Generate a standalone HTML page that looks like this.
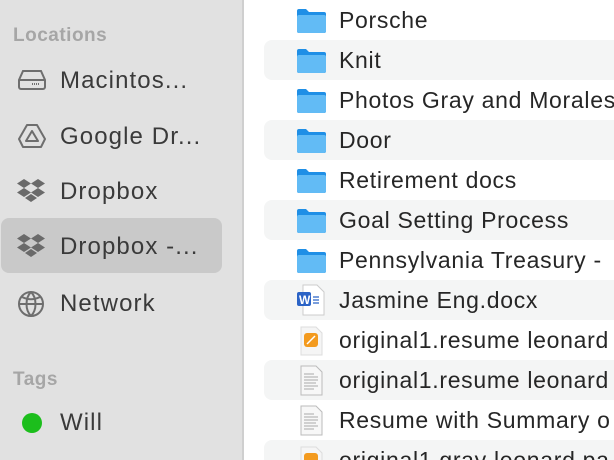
<!DOCTYPE html><html><head><style>
html,body{margin:0;width:614px;height:460px;overflow:hidden}
body{background:#fff;font-family:"Liberation Sans",sans-serif;position:relative}
#sb{position:absolute;left:0;top:0;width:242px;height:460px;background:#e1e1e1;border-right:2px solid #cfcfcf}
.h{position:absolute;left:13px;font-size:19px;font-weight:bold;color:#a6a6a6;letter-spacing:0.5px}
.it{position:absolute;left:60px;font-size:24px;color:#3a3a3a;line-height:30px;letter-spacing:1.1px}
.ic{position:absolute;left:17px}
.sel{position:absolute;left:1px;top:218px;width:221px;height:55px;background:#c9c9c9;border-radius:8px}
.row{position:absolute;left:264px;width:360px;height:40px}
.s{background:#f4f5f5;border-radius:8px 0 0 8px}
.t{position:absolute;left:75px;top:7px;font-size:23px;color:#262626;white-space:nowrap;letter-spacing:0.7px}
.f{position:absolute;left:33px;top:8px}
</style></head><body>
<div id="sb">
<div class="h" style="top:25px">Locations</div>
<div class="sel"></div>
<svg class="ic" style="top:69px" width="30" height="22" viewBox="0 0 30 22"><path d="M6 2h18l4 9v7a2 2 0 0 1-2 2H4a2 2 0 0 1-2-2v-7z M2 11h26" fill="none" stroke="#6e6e6e" stroke-width="2"/><path d="M15 15h7" stroke="#6e6e6e" stroke-width="2" stroke-dasharray="1 1"/></svg>
<div class="it" style="top:66px">Macintos...</div>
<svg class="ic" style="top:123px" width="30" height="26" viewBox="0 0 30 26"><path d="M10 2h10l8 14-4 8H6l-4-8z M15 8l6 10H9z" fill="none" stroke="#6e6e6e" stroke-width="2" stroke-linejoin="round"/></svg>
<div class="it" style="top:122px">Google Dr...</div>
<svg class="ic" style="top:179px" width="28" height="24" viewBox="0 0 28 24"><g fill="#6a6a6a"><path d="M7 0l7 4.5-7 4.5-7-4.5z M21 0l7 4.5-7 4.5-7-4.5z M7 9l7 4.5-7 4.5-7-4.5z M21 9l7 4.5-7 4.5-7-4.5z M14 15l6 4-6 4-6-4z"/></g></svg>
<div class="it" style="top:177px">Dropbox</div>
<svg class="ic" style="top:234px" width="28" height="24" viewBox="0 0 28 24"><g fill="#6a6a6a"><path d="M7 0l7 4.5-7 4.5-7-4.5z M21 0l7 4.5-7 4.5-7-4.5z M7 9l7 4.5-7 4.5-7-4.5z M21 9l7 4.5-7 4.5-7-4.5z M14 15l6 4-6 4-6-4z"/></g></svg>
<div class="it" style="top:232px">Dropbox -...</div>
<svg class="ic" style="top:290px" width="28" height="28" viewBox="0 0 28 28"><g fill="none" stroke="#6e6e6e" stroke-width="2"><circle cx="14" cy="14" r="12"/><path d="M2 14h24 M14 2c-6 6-6 18 0 24 M14 2c6 6 6 18 0 24 M5 7c6 3 12 3 18 0"/></g></svg>
<div class="it" style="top:289px">Network</div>
<div class="h" style="top:369px">Tags</div>
<svg class="ic" style="top:413px;left:22px" width="20" height="20"><circle cx="10" cy="10" r="10" fill="#1cbe1c"/></svg>
<div class="it" style="top:408px">Will</div>
</div>
<div class="row" style="top:0"><svg class="f" width="29" height="25"><path d="M0 3a2 2 0 0 1 2-2h7l3 3h15a2 2 0 0 1 2 2v17a2 2 0 0 1-2 2H2a2 2 0 0 1-2-2z" fill="#1f8fe6"/><rect x="0" y="7" width="29" height="18" rx="2" fill="#62bbf5"/></svg><div class="t">Porsche</div></div>
<div class="row s" style="top:40px"><svg class="f" width="29" height="25"><path d="M0 3a2 2 0 0 1 2-2h7l3 3h15a2 2 0 0 1 2 2v17a2 2 0 0 1-2 2H2a2 2 0 0 1-2-2z" fill="#1f8fe6"/><rect x="0" y="7" width="29" height="18" rx="2" fill="#62bbf5"/></svg><div class="t">Knit</div></div>
<div class="row" style="top:80px"><svg class="f" width="29" height="25"><path d="M0 3a2 2 0 0 1 2-2h7l3 3h15a2 2 0 0 1 2 2v17a2 2 0 0 1-2 2H2a2 2 0 0 1-2-2z" fill="#1f8fe6"/><rect x="0" y="7" width="29" height="18" rx="2" fill="#62bbf5"/></svg><div class="t">Photos Gray and Morales</div></div>
<div class="row s" style="top:120px"><svg class="f" width="29" height="25"><path d="M0 3a2 2 0 0 1 2-2h7l3 3h15a2 2 0 0 1 2 2v17a2 2 0 0 1-2 2H2a2 2 0 0 1-2-2z" fill="#1f8fe6"/><rect x="0" y="7" width="29" height="18" rx="2" fill="#62bbf5"/></svg><div class="t">Door</div></div>
<div class="row" style="top:160px"><svg class="f" width="29" height="25"><path d="M0 3a2 2 0 0 1 2-2h7l3 3h15a2 2 0 0 1 2 2v17a2 2 0 0 1-2 2H2a2 2 0 0 1-2-2z" fill="#1f8fe6"/><rect x="0" y="7" width="29" height="18" rx="2" fill="#62bbf5"/></svg><div class="t">Retirement docs</div></div>
<div class="row s" style="top:200px"><svg class="f" width="29" height="25"><path d="M0 3a2 2 0 0 1 2-2h7l3 3h15a2 2 0 0 1 2 2v17a2 2 0 0 1-2 2H2a2 2 0 0 1-2-2z" fill="#1f8fe6"/><rect x="0" y="7" width="29" height="18" rx="2" fill="#62bbf5"/></svg><div class="t">Goal Setting Process</div></div>
<div class="row" style="top:240px"><svg class="f" width="29" height="25"><path d="M0 3a2 2 0 0 1 2-2h7l3 3h15a2 2 0 0 1 2 2v17a2 2 0 0 1-2 2H2a2 2 0 0 1-2-2z" fill="#1f8fe6"/><rect x="0" y="7" width="29" height="18" rx="2" fill="#62bbf5"/></svg><div class="t">Pennsylvania Treasury -</div></div>
<div class="row s" style="top:280px"><svg class="f" style="top:4px" width="30" height="32"><path d="M6 1h14l7 7v23H6z" fill="#fff" stroke="#ccc"/><rect x="0" y="8" width="14" height="14" rx="2" fill="#2b63c6"/><text x="2" y="20" font-size="12" font-weight="bold" fill="#fff" font-family="Liberation Sans">W</text><path d="M16 13h6M16 16h6M16 19h6" stroke="#2b63c6" stroke-width="1.3"/></svg><div class="t">Jasmine Eng.docx</div></div>
<div class="row" style="top:320px"><svg class="f" style="top:6px" width="30" height="30"><path d="M4 1h15l6 6v22H4z" fill="#f5f5f5" stroke="#ddd"/><rect x="7" y="7" width="14" height="14" rx="3" fill="#f39a1e"/><path d="M10 18l8-8" stroke="#fff" stroke-width="1.5"/></svg><div class="t">original1.resume leonard</div></div>
<div class="row s" style="top:360px"><svg class="f" style="top:5px" width="30" height="32"><path d="M4 1h15l6 6v23H4z" fill="#f7f7f7" stroke="#bbb"/><path d="M7 9h10M7 12h14M7 15h14M7 18h12M7 21h14M7 24h10" stroke="#aaa"/></svg><div class="t">original1.resume leonard</div></div>
<div class="row" style="top:400px"><svg class="f" style="top:5px" width="30" height="32"><path d="M4 1h15l6 6v23H4z" fill="#f7f7f7" stroke="#bbb"/><path d="M7 9h10M7 12h14M7 15h14M7 18h12M7 21h14M7 24h10" stroke="#aaa"/></svg><div class="t">Resume with Summary o</div></div>
<div class="row s" style="top:440px"><svg class="f" style="top:6px" width="30" height="30"><path d="M4 1h15l6 6v22H4z" fill="#f5f5f5" stroke="#ddd"/><rect x="7" y="7" width="14" height="14" rx="3" fill="#f39a1e"/></svg><div class="t">original1.gray leonard pa</div></div>
</body></html>
